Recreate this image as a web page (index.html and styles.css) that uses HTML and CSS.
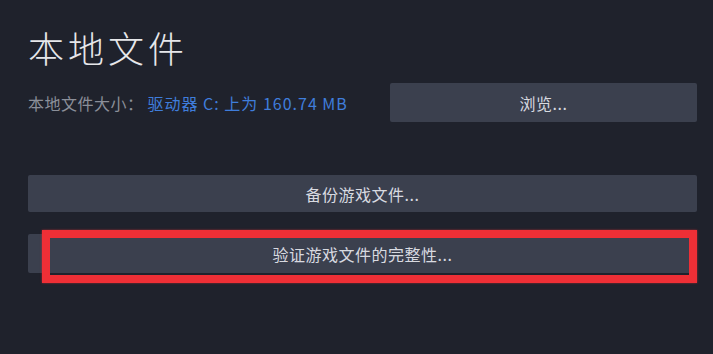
FILE: index.html
```html
<!DOCTYPE html>
<html>
<head>
  <title>本地文件</title>
  <link rel="stylesheet" href="styles.css">
</head>
<body>
  <div class="panel">
    <h1 class="title">本地文件</h1>

    <div class="size-row">
      <span class="size-label">本地文件大小：</span>
      <span class="size-value">驱动器 C: 上为 160.74 MB</span>
      <button class="button browse-button">浏览...</button>
    </div>

    <button class="button wide-button backup-button">备份游戏文件...</button>

    <div class="verify-wrap">
      <button class="button wide-button">验证游戏文件的完整性...</button>
      <!-- red highlight drawn over the button -->
      <div class="highlight"></div>
    </div>
  </div>
</body>
</html>
```

FILE: styles.css
```css
body {
    margin: 0;
    padding: 0;
    background-color: #1f222c;
    height: 100vh;
    overflow: hidden;
    font-family: "Noto Sans CJK SC", "Noto Sans", sans-serif;
}

.panel {
    display: flex;
    flex-direction: column;
    padding: 28px 16px 0 28px;
}

.title {
    margin: 0;
    font-size: 36px;
    line-height: 38px;
    font-weight: 300;
    letter-spacing: 4px;
    color: #e6e7ea;
}

.size-row {
    display: flex;
    align-items: center;
    margin-top: 17px;
    font-size: 16px;
}

.size-label {
    color: #8b8f99;
    letter-spacing: 0.5px;
}

.size-value {
    margin-left: 4px;
    color: #3f7ddb;
    letter-spacing: 1px;
}

.button {
    font-family: "Noto Sans CJK SC", "Noto Sans", sans-serif;
    font-size: 16px;
    letter-spacing: 0.5px;
    text-align: center;
    padding: 0;
    background-color: #3b404e;
    color: #d8dae0;
    border: none;
    border-radius: 2px;
    cursor: pointer;
}

.button:hover {
    background-color: #4a5060;
}

.browse-button {
    margin-left: auto;
    width: 307px;
    height: 39px;
}

.wide-button {
    width: 100%;
    height: 38px;
}

.backup-button {
    margin-top: 53px;
    height: 37px;
}

.verify-wrap {
    position: relative;
    margin-top: 22px;
}

.verify-wrap .wide-button {
    height: 39px;
    display: block;
}

.highlight {
    position: absolute;
    top: -4px;
    left: 14px;
    right: 0;
    bottom: -10px;
    border: 8px solid #ee2f36;
    box-shadow: 0 0 2px rgba(238, 47, 54, 0.6);
}
```
